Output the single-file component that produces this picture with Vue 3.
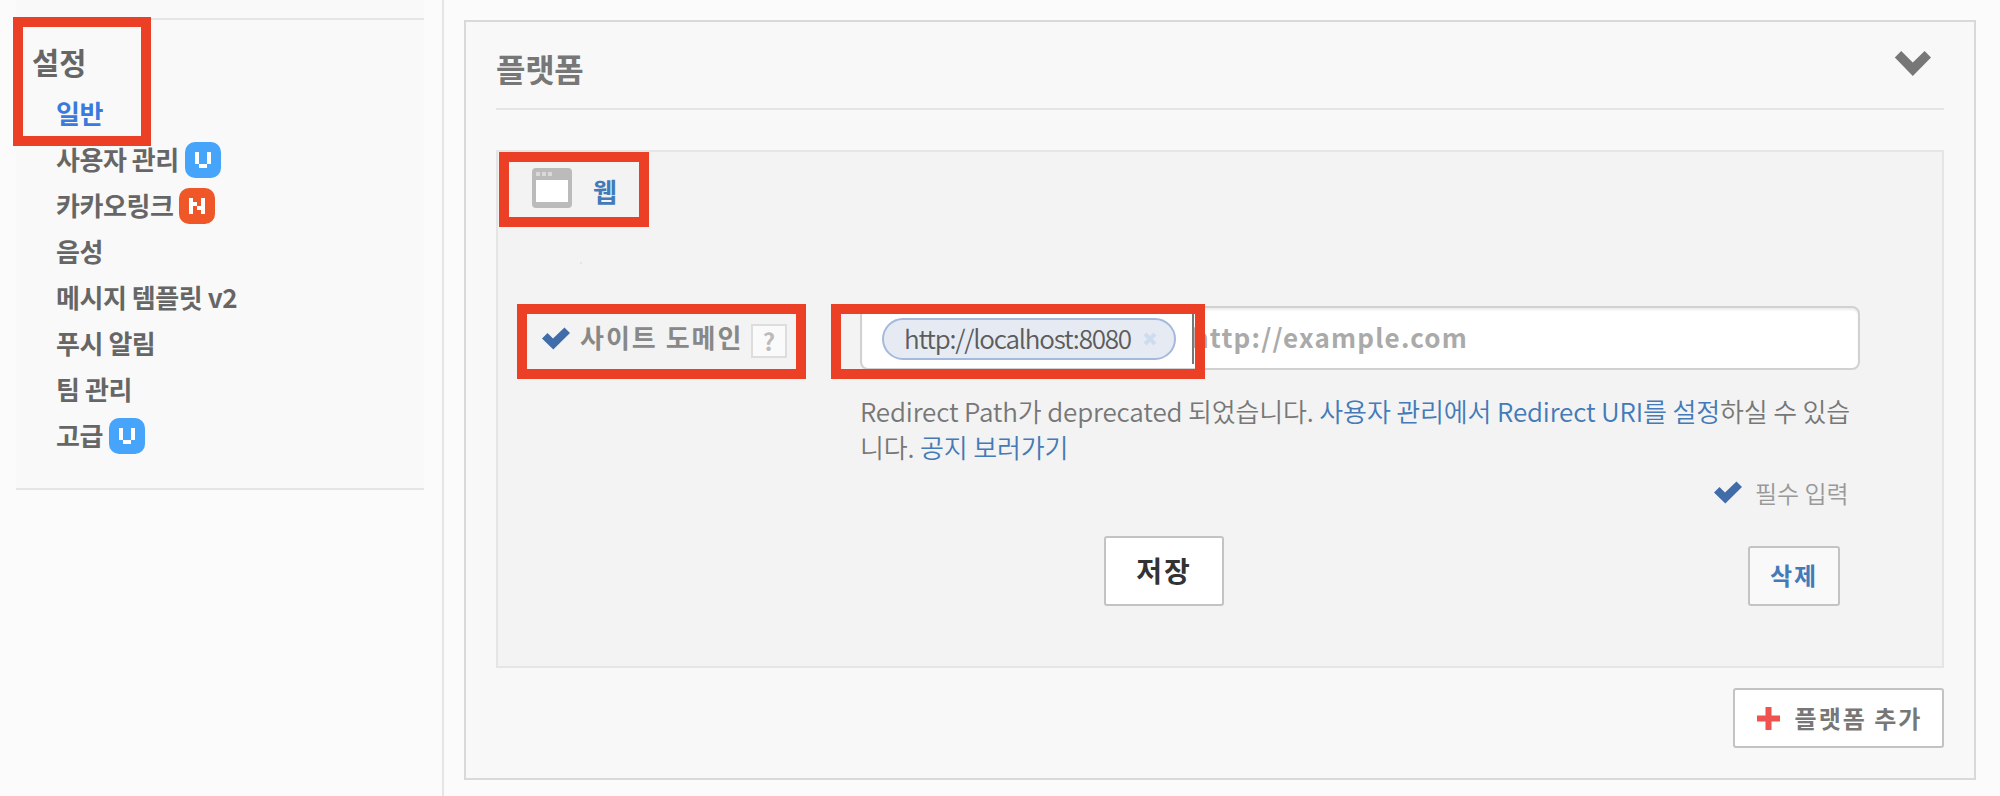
<script setup>
const menu = [
  { label: '일반', active: true },
  { label: '사용자 관리', badge: 'U' },
  { label: '카카오링크', badge: 'N' },
  { label: '음성' },
  { label: '메시지 템플릿 v2' },
  { label: '푸시 알림' },
  { label: '팀 관리' },
  { label: '고급', badge: 'U' },
]
</script>

<template>
  <div class="page">
    <aside class="sidebar">
      <nav class="side-panel">
        <h2>설정</h2>
        <ul>
          <li v-for="item in menu" :key="item.label" :class="{ active: item.active }">
            <span>{{ item.label }}</span>
            <svg v-if="item.badge" class="badge" viewBox="0 0 36 36" width="36" height="36">
              <rect width="36" height="36" rx="10" :fill="item.badge === 'U' ? '#47a4fb' : '#ef5728'" />
              <path v-if="item.badge === 'U'" fill="#fff" d="M10 10h4v12h-4zM22 10h4v12h-4zM14 22h8v4h-8z" />
              <path v-else fill="#fff" d="M10 10h4v4h4v4h4v-8h4v16h-4v-4h-4v-4h-4v8h-4z" />
            </svg>
          </li>
        </ul>
      </nav>
    </aside>

    <main class="content">
      <section class="panel">
        <header class="panel-head">
          <h1>플랫폼</h1>
          <svg class="chevron" viewBox="0 0 38 27" width="38" height="27">
            <path fill="#777" d="M0.8 8.5L7.2 2L18.8 13.6L30.6 2L37 8.5L18.8 27z" />
          </svg>
        </header>

        <div class="card">
          <div class="card-head">
            <svg viewBox="0 0 40 40" width="40" height="40">
              <rect width="40" height="40" rx="4" fill="#bbb" />
              <rect x="4" y="12" width="32" height="22" fill="#fff" />
              <path fill="#d9d9d9" d="M4 4h4v4h-4zM10 4h4v4h-4zM16 4h4v4h-4z" />
            </svg>
            <a>웹</a>
          </div>
          <i class="speck"></i>

          <div class="field">
            <div class="label">
              <svg class="check" viewBox="0 0 28 23" width="28" height="23">
                <path fill="#406ca9" d="M0 11.5L5.5 6L11 11.5L22.5 0.5L28 6L11.3 22.5z" />
              </svg>
              <span class="label-text">사이트 도메인</span>
              <span class="help">?</span>
            </div>
            <div class="input">
              <span class="tag">
                <span class="tag-text">http://localhost:8080</span>
                <svg viewBox="0 0 14 14" width="14" height="14">
                  <path d="M2 2L12 12M12 2L2 12" stroke="#cddcee" stroke-width="4" />
                </svg>
              </span>
              <i class="caret"></i>
              <span class="placeholder">http://example.com</span>
            </div>
          </div>

          <p class="note">Redirect Path가 deprecated 되었습니다. <a>사용자 관리에서 Redirect URI를 설정</a>하실 수 있습<br />니다. <a>공지 보러가기</a></p>

          <div class="required">
            <svg class="check" viewBox="0 0 28 23" width="28" height="23">
              <path fill="#406ca9" d="M0 11.5L5.5 6L11 11.5L22.5 0.5L28 6L11.3 22.5z" />
            </svg>
            <span>필수 입력</span>
          </div>

          <div class="actions">
            <button class="save">저장</button>
            <button class="delete">삭제</button>
          </div>
        </div>

        <button class="add">
          <svg viewBox="0 0 23 23" width="23" height="23">
            <path fill="#ee534f" d="M8.5 0h6v8.5H23v6h-8.5V23h-6v-8.5H0v-6h8.5z" />
          </svg>
          <span>플랫폼 추가</span>
        </button>
      </section>
    </main>

    <div class="mark mark-menu"></div>
    <div class="mark mark-web"></div>
    <div class="mark mark-domain"></div>
    <div class="mark mark-url"></div>
  </div>
</template>

<style>
body {
  margin: 0;
  background: #fbfbfb;
}
</style>

<style scoped>
* {
  box-sizing: border-box;
}
.page {
  position: relative;
  display: flex;
  width: 2000px;
  height: 796px;
  overflow: hidden;
  background: #fbfbfb;
  font-family: "Noto Sans CJK KR", "Noto Sans", sans-serif;
  color: #666;
}
svg {
  display: block;
  flex: none;
}
.sidebar {
  width: 444px;
  padding-left: 16px;
  border-right: 2px solid #e5e5e5;
}
.side-panel {
  width: 408px;
  height: 490px;
  padding-top: 18px;
  background: #f9f9f9;
  border-bottom: 2px solid #e5e5e5;
}
h2 {
  margin: 0;
  height: 73px;
  padding-left: 16px;
  border-top: 2px solid #e5e5e5;
  font-size: 29.5px;
  line-height: 82px;
  font-weight: 700;
}
ul {
  margin: 0;
  padding: 0 0 0 40px;
  list-style: none;
}
li {
  display: flex;
  align-items: center;
  gap: 6px;
  height: 46px;
  font-size: 26px;
  line-height: 44px;
  font-weight: 700;
  letter-spacing: -0.45px;
}
li span {
  height: 46px;
}
li.active {
  color: #3a7ade;
}
.content {
  padding: 20px 0 0 20px;
}
.panel {
  display: flex;
  flex-direction: column;
  width: 1512px;
  height: 760px;
  padding: 0 30px;
  background: #f8f8f8;
  border: 2px solid #d9d9d9;
}
.panel-head {
  display: flex;
  justify-content: space-between;
  height: 88px;
  padding: 27px 12px 0 0;
  border-bottom: 2px solid #e5e5e5;
}
h1 {
  margin: 0;
  font-size: 32px;
  line-height: 38px;
  font-weight: 700;
  letter-spacing: -0.3px;
  color: #777;
}
.card {
  height: 518px;
  margin-top: 40px;
  background: #f3f3f3;
  border: 2px solid #e5e5e5;
}
.card-head {
  display: flex;
  gap: 21px;
  height: 110px;
  padding: 16px 0 0 34px;
}
.card-head a {
  font-size: 26px;
  line-height: 45px;
  font-weight: 700;
}
a {
  color: #437ab7;
}
.speck {
  display: block;
  width: 2px;
  height: 2px;
  margin-left: 82px;
  background: #e5e5e5;
}
.field {
  display: flex;
  padding-left: 44px;
  margin-top: 42px;
}
.label {
  display: flex;
  width: 318px;
  height: 64px;
  padding-top: 18px;
}
.label .check {
  margin-top: 3px;
}
.label-text {
  width: 170px;
  margin: -6px 0 0 10px;
  font-size: 26px;
  line-height: 38px;
  font-weight: 700;
  letter-spacing: 2px;
  color: #888;
  white-space: nowrap;
}
.help {
  width: 36px;
  height: 34px;
  margin-left: 1px;
  background: #fafafa;
  border: 2px solid #ddd;
  font-size: 24px;
  line-height: 29px;
  font-weight: 700;
  text-align: center;
  color: #bbb;
}
.input {
  display: flex;
  align-items: center;
  width: 1000px;
  height: 64px;
  padding-left: 20px;
  background: #fff;
  border: 2px solid #d1d1d1;
  border-radius: 8px;
  box-shadow: inset 0 2px 2px #ededed;
}
.tag {
  display: flex;
  align-items: center;
  justify-content: space-between;
  width: 294px;
  height: 42px;
  margin-top: 2px;
  padding: 0 17px 0 20px;
  background: #e6ebf3;
  border: 2px solid #a4b9dc;
  border-radius: 21px;
}
.tag-text {
  height: 38px;
  font-size: 26px;
  line-height: 36px;
  font-weight: 350;
  letter-spacing: -1.2px;
  color: #5c5c5c;
}
.caret {
  width: 2px;
  height: 52px;
  margin-left: 16px;
  background: #777;
}
.placeholder {
  margin: -3px 0 0 -2px;
  font-size: 26px;
  font-weight: 700;
  letter-spacing: 1.2px;
  color: #aaa;
}
.note {
  height: 72px;
  margin: 23px 0 0 362px;
  font-size: 26px;
  line-height: 36px;
  font-weight: 350;
  letter-spacing: -0.15px;
  white-space: nowrap;
  color: #777;
}
.required {
  display: flex;
  gap: 13px;
  height: 71px;
  padding: 16px 0 0 1216px;
  color: #999;
}
.required span {
  font-size: 24px;
  line-height: 24px;
  font-weight: 350;
}
button {
  display: flex;
  align-items: center;
  justify-content: center;
  padding: 0 0 2px;
  border: 2px solid #c3c3c3;
  border-radius: 3px;
  background: #fff;
  font-family: inherit;
  font-weight: 700;
  letter-spacing: 2px;
}
.actions {
  display: flex;
  align-items: flex-end;
  padding-left: 606px;
}
.save {
  width: 120px;
  height: 70px;
  font-size: 28px;
  color: #333;
}
.delete {
  width: 92px;
  height: 60px;
  margin-left: 524px;
  padding-bottom: 3px;
  background: #f9f9f9;
  font-size: 24px;
  color: #437ab7;
}
.add {
  align-self: flex-end;
  width: 211px;
  height: 60px;
  gap: 15px;
  margin-top: 20px;
  padding: 0 0 2px 2px;
  font-size: 24px;
  color: #777;
}
.add svg {
  margin-top: 3px;
}
/* Red callout frames drawn over the page */
.mark {
  position: absolute;
  border: 10px solid #eb3f26;
}
.mark-menu {
  left: 13px;
  top: 17px;
  width: 138px;
  height: 129px;
}
.mark-web {
  left: 499px;
  top: 152px;
  width: 150px;
  height: 75px;
}
.mark-domain {
  left: 517px;
  top: 304px;
  width: 289px;
  height: 75px;
}
.mark-url {
  left: 831px;
  top: 304px;
  width: 374px;
  height: 75px;
}
</style>
